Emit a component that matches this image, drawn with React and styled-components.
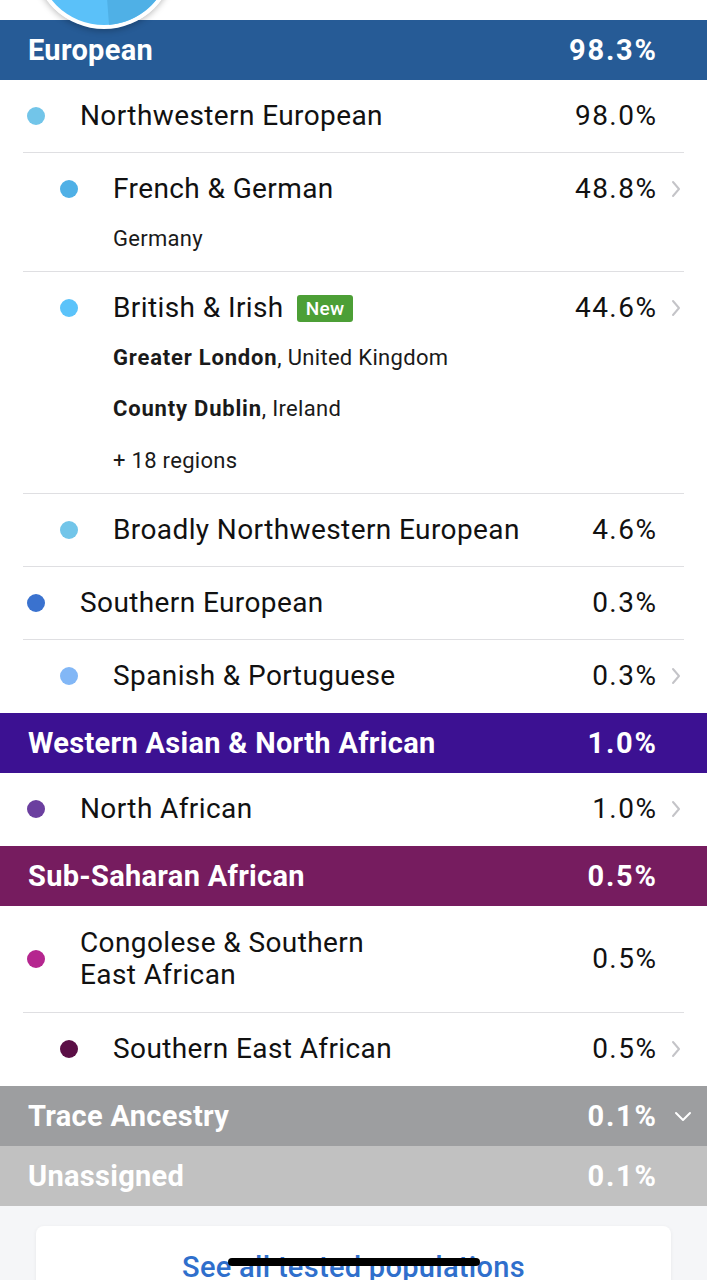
import React from "react"
import styled, { createGlobalStyle } from "styled-components"

const GlobalStyle = createGlobalStyle`
  html, body {
    margin: 0;
    padding: 0;
    background: #f5f6f8;
    font-family: Roboto, "Liberation Sans", Arial, sans-serif;
    -webkit-font-smoothing: antialiased;
  }
`

const Page = styled.div`
  width: 707px;
  min-height: 1280px;
  background: #f5f6f8;
  position: relative;
  overflow: hidden;
`

const TopArea = styled.div`
  height: 20px;
  background: #fff;
  position: relative;
`

const PieHolder = styled.div`
  position: absolute;
  left: 33px;
  top: -113px;
  width: 142px;
  height: 142px;
  z-index: 2;
  border-radius: 50%;
  box-shadow: 0 2px 6px rgba(0, 0, 0, 0.25);
`

const Header = styled.div`
  display: flex;
  align-items: center;
  height: 60px;
  padding-left: 28px;
  background: ${props => props.color};
  color: #fff;
  font-size: 29px;
  font-weight: 700;
  letter-spacing: 0.3px;
`

const HeaderLabel = styled.div`
  flex: 1;
`

const HeaderPct = styled.span`
  letter-spacing: 1.8px;
  margin-right: -1.8px;
`

const HeaderTail = styled.div`
  width: 51px;
  display: flex;
  justify-content: center;
  padding-left: 3px;
  box-sizing: border-box;
`

const Group = styled.div`
  background: #fff;
  padding: 0 23px 1px;
`

const Row = styled.div`
  display: flex;
  align-items: flex-start;
  padding: ${props => (props.center ? "21px" : "20px")} 0
    ${props => (props.hasSubs ? "17px" : props.center ? "21px" : "20px")}
    ${props => (props.level === 2 ? "33px" : "0")};
  & + & {
    border-top: 1px solid #dfdfe2;
  }
`

const Dot = styled.span`
  flex: none;
  align-self: ${props => (props.center ? "center" : "flex-start")};
  width: 18px;
  height: 18px;
  margin: ${props => (props.center ? "0" : "7px")} 35px 0 4px;
  border-radius: 50%;
  background: ${props => props.color};
`

const Body = styled.div`
  flex: 1;
`

const Title = styled.div`
  display: flex;
  align-items: center;
  font-size: 28px;
  line-height: 32px;
  letter-spacing: 0.4px;
  color: #111;
`

const Badge = styled.span`
  margin-left: 13px;
  padding: 0 9px;
  height: 27px;
  line-height: 27px;
  border-radius: 3px;
  background: #4c9f36;
  color: #fff;
  font-size: 19px;
  font-weight: 500;
  letter-spacing: 0.3px;
`

const Sub = styled.div`
  margin-top: ${props => props.gap}px;
  font-size: 22px;
  line-height: 30px;
  letter-spacing: 0.3px;
  color: #1a1a1a;
  b {
    font-weight: 700;
    letter-spacing: 0.8px;
  }
`

const Percent = styled.div`
  align-self: ${props => (props.center ? "center" : "flex-start")};
  font-size: 28px;
  line-height: 32px;
  letter-spacing: 1.5px;
  margin-right: -1.5px;
  color: #111;
`

const Tail = styled.div`
  align-self: ${props => (props.center ? "center" : "flex-start")};
  width: 28px;
  height: 32px;
  display: flex;
  align-items: center;
  justify-content: flex-end;
  padding-right: 3px;
  box-sizing: border-box;
`

const Footer = styled.div`
  padding: 20px 36px 0;
`

const Card = styled.div`
  background: #fff;
  border-radius: 8px;
  box-shadow: 0 1px 4px rgba(0, 0, 0, 0.06);
  padding: 25px 0 30px;
  text-align: center;
  color: #2f6fcc;
  font-size: 29px;
  font-weight: 500;
  line-height: 32px;
  letter-spacing: 0.3px;
`

const HomeBar = styled.div`
  position: fixed;
  left: 228px;
  bottom: 14px;
  width: 252px;
  height: 8px;
  border-radius: 4px;
  background: #000;
  z-index: 3;
`

const Pie = () => (
  <PieHolder>
    <svg width="142" height="142" viewBox="0 0 142 142">
      <circle cx="71" cy="71" r="71" fill="#fff" />
      <circle cx="71" cy="71" r="67" fill="#5bc1f9" />
      <path d="M71 71 L71 4 A67 67 0 0 1 76 137.8 Z" fill="#4fb0e6" />
    </svg>
  </PieHolder>
)

const ChevronRight = () => (
  <svg width="10" height="18" viewBox="0 0 10 18">
    <polyline
      points="2,2 8,9 2,16"
      fill="none"
      stroke="#c4c4c8"
      strokeWidth="2"
      strokeLinecap="round"
      strokeLinejoin="round"
    />
  </svg>
)

const ChevronDown = () => (
  <svg width="18" height="11" viewBox="0 0 18 11">
    <polyline
      points="2,2 9,9 16,2"
      fill="none"
      stroke="#fff"
      strokeWidth="2"
      strokeLinecap="round"
      strokeLinejoin="round"
    />
  </svg>
)

const groups = [
  {
    name: "European",
    pct: "98.3%",
    color: "#265b96",
    rows: [
      { label: "Northwestern European", pct: "98.0%", dot: "#72c5e9", level: 1 },
      {
        label: "French & German",
        pct: "48.8%",
        dot: "#4fb0e6",
        level: 2,
        more: true,
        subs: [["", "Germany"]],
      },
      {
        label: "British & Irish",
        pct: "44.6%",
        dot: "#5bc3fa",
        level: 2,
        more: true,
        isNew: true,
        subs: [
          ["Greater London", ", United Kingdom"],
          ["County Dublin", ", Ireland"],
          ["", "+ 18 regions"],
        ],
      },
      { label: "Broadly Northwestern European", pct: "4.6%", dot: "#72c5e9", level: 2 },
      { label: "Southern European", pct: "0.3%", dot: "#3a72cf", level: 1 },
      { label: "Spanish & Portuguese", pct: "0.3%", dot: "#82b7f6", level: 2, more: true },
    ],
  },
  {
    name: "Western Asian & North African",
    pct: "1.0%",
    color: "#3c1192",
    rows: [{ label: "North African", pct: "1.0%", dot: "#6b3f9f", level: 1, more: true }],
  },
  {
    name: "Sub-Saharan African",
    pct: "0.5%",
    color: "#761c5f",
    rows: [
      {
        label: ["Congolese & Southern", "East African"],
        pct: "0.5%",
        dot: "#b5268f",
        level: 1,
        center: true,
      },
      { label: "Southern East African", pct: "0.5%", dot: "#5b0f46", level: 2, more: true },
    ],
  },
]

const subGaps = [19, 21, 22]

const AncestryRow = ({ row }) => (
  <Row level={row.level} hasSubs={!!row.subs} center={row.center}>
    <Dot color={row.dot} center={row.center} />
    <Body>
      <Title>
        {Array.isArray(row.label) ? (
          <span>
            {row.label[0]}
            <br />
            {row.label[1]}
          </span>
        ) : (
          row.label
        )}
        {row.isNew && <Badge>New</Badge>}
      </Title>
      {row.subs &&
        row.subs.map(([bold, rest], i) => (
          <Sub key={i} gap={subGaps[i]}>
            {bold && <b>{bold}</b>}
            {rest}
          </Sub>
        ))}
    </Body>
    <Percent center={row.center}>{row.pct}</Percent>
    <Tail center={row.center}>{row.more && <ChevronRight />}</Tail>
  </Row>
)

export default function App() {
  return (
    <Page>
      <GlobalStyle />
      <TopArea>
        <Pie />
      </TopArea>
      {groups.map(g => (
        <React.Fragment key={g.name}>
          <Header color={g.color}>
            <HeaderLabel>{g.name}</HeaderLabel>
            <HeaderPct>{g.pct}</HeaderPct>
            <HeaderTail />
          </Header>
          <Group>
            {g.rows.map((r, i) => (
              <AncestryRow key={i} row={r} />
            ))}
          </Group>
        </React.Fragment>
      ))}
      <Header color="#9d9ea0">
        <HeaderLabel>Trace Ancestry</HeaderLabel>
        <HeaderPct>0.1%</HeaderPct>
        <HeaderTail>
          <ChevronDown />
        </HeaderTail>
      </Header>
      <Header color="#c1c1c1">
        <HeaderLabel>Unassigned</HeaderLabel>
        <HeaderPct>0.1%</HeaderPct>
        <HeaderTail />
      </Header>
      <Footer>
        <Card>See all tested populations</Card>
      </Footer>
      <HomeBar />
    </Page>
  )
}
